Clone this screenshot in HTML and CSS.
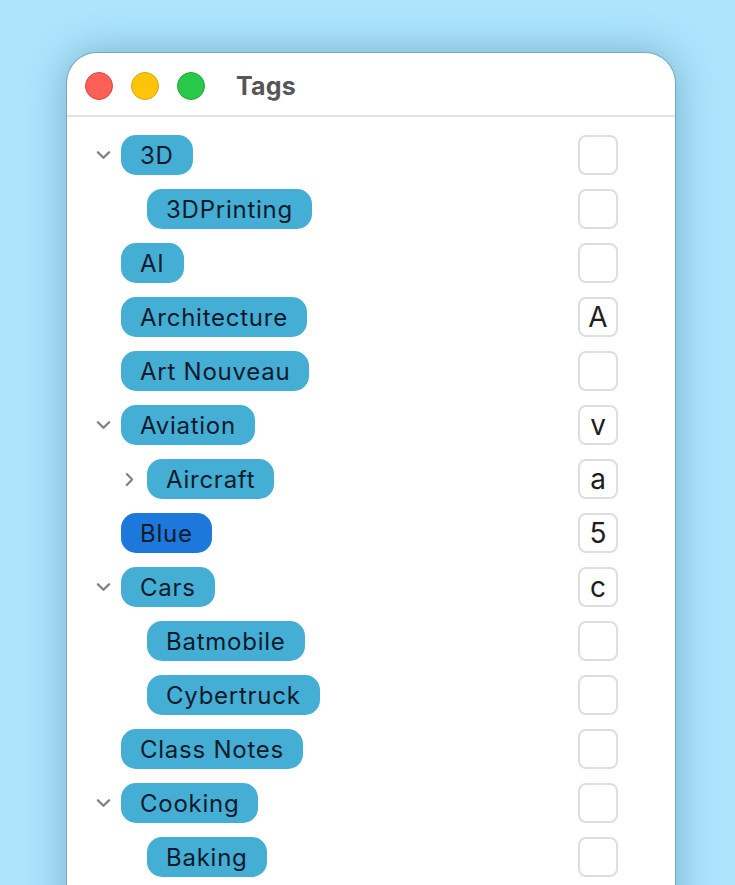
FILE: index.html
```html
<!DOCTYPE html>
<html lang="en">
<head>
    <meta charset="UTF-8">
    <meta name="viewport" content="width=device-width, initial-scale=1.0">
    <title>Tags</title>
    <link rel="stylesheet" href="styles.css">
</head>
<body>

    <div class="window">
        <div class="titlebar">
            <div class="lights">
                <span class="light red"></span>
                <span class="light yellow"></span>
                <span class="light green"></span>
            </div>
            <h1>Tags</h1>
        </div>

        <ul class="tag-list">
            <li class="tag-row">
                <span class="disc down"><svg viewBox="0 0 16 10"><path d="M2 2 L8 8 L14 2"/></svg></span>
                <span class="pill">3D</span>
                <span class="key"></span>
            </li>
            <li class="tag-row lvl1">
                <span class="disc"></span>
                <span class="pill">3DPrinting</span>
                <span class="key"></span>
            </li>
            <li class="tag-row">
                <span class="disc"></span>
                <span class="pill">AI</span>
                <span class="key"></span>
            </li>
            <li class="tag-row">
                <span class="disc"></span>
                <span class="pill">Architecture</span>
                <span class="key">A</span>
            </li>
            <li class="tag-row">
                <span class="disc"></span>
                <span class="pill">Art Nouveau</span>
                <span class="key"></span>
            </li>
            <li class="tag-row">
                <span class="disc down"><svg viewBox="0 0 16 10"><path d="M2 2 L8 8 L14 2"/></svg></span>
                <span class="pill">Aviation</span>
                <span class="key">v</span>
            </li>
            <li class="tag-row lvl1">
                <span class="disc right"><svg viewBox="0 0 10 16"><path d="M2 2 L8 8 L2 14"/></svg></span>
                <span class="pill">Aircraft</span>
                <span class="key">a</span>
            </li>
            <li class="tag-row">
                <span class="disc"></span>
                <span class="pill blue">Blue</span>
                <span class="key">5</span>
            </li>
            <li class="tag-row">
                <span class="disc down"><svg viewBox="0 0 16 10"><path d="M2 2 L8 8 L14 2"/></svg></span>
                <span class="pill">Cars</span>
                <span class="key">c</span>
            </li>
            <li class="tag-row lvl1">
                <span class="disc"></span>
                <span class="pill">Batmobile</span>
                <span class="key"></span>
            </li>
            <li class="tag-row lvl1">
                <span class="disc"></span>
                <span class="pill">Cybertruck</span>
                <span class="key"></span>
            </li>
            <li class="tag-row">
                <span class="disc"></span>
                <span class="pill">Class Notes</span>
                <span class="key"></span>
            </li>
            <li class="tag-row">
                <span class="disc down"><svg viewBox="0 0 16 10"><path d="M2 2 L8 8 L14 2"/></svg></span>
                <span class="pill">Cooking</span>
                <span class="key"></span>
            </li>
            <li class="tag-row lvl1">
                <span class="disc"></span>
                <span class="pill">Baking</span>
                <span class="key"></span>
            </li>
        </ul>
    </div>

</body>
</html>
```

FILE: styles.css
```css
:root { --pill: #45aed5; --pill-blue: #1c78db; --ink: #0b1b2b; --line: #e2e2e2; }
html, body { height: 100%; }
body {
    margin: 0;
    font-family: Inter, "Noto Sans", sans-serif;
    background: #ace5fc;
    overflow: hidden;
    padding: 53px 0 0 67px;
    box-sizing: border-box;
}

/* VENTANA */
.window {
    width: 608px;
    height: 900px;
    background: #fff;
    border-radius: 30px 30px 0 0;
    box-shadow: 0 0 0 1px rgba(60, 100, 120, 0.35), 0 0 40px rgba(20, 70, 100, 0.35);
}

.titlebar {
    height: 59px;
    padding-top: 3px;
    display: flex;
    align-items: center;
    padding-left: 18px;
    border-bottom: 2px solid var(--line);
}
.lights { display: flex; gap: 18px; }
.light { width: 28px; height: 28px; border-radius: 50%; box-sizing: border-box; }
.light.red { background: #fe5f57; border: 1px solid #e0443e; }
.light.yellow { background: #fec40a; border: 1px solid #dea40a; }
.light.green { background: #2ac84a; border: 1px solid #1aab29; }
.titlebar h1 { margin: 0 0 0 31px; font-size: 25px; font-weight: 700; color: #565656; letter-spacing: 0.2px; }

/* LISTA DE TAGS */
.tag-list { list-style: none; margin: 0; padding: 11px 0 0; }
.tag-row {
    height: 54px;
    display: flex;
    align-items: center;
    padding-left: 28px;
    padding-right: 57px;
}
.tag-row.lvl1 { padding-left: 54px; }

.disc { width: 16px; margin-right: 10px; display: flex; justify-content: center; align-items: center; }
.disc svg { fill: none; stroke: #7f7f7f; stroke-width: 2.4; stroke-linecap: round; stroke-linejoin: round; }
.disc.down svg { width: 15px; height: 10px; }
.disc.right svg { width: 9px; height: 15px; }

.pill {
    height: 40px;
    line-height: 41px;
    padding: 0 19px;
    border-radius: 15px;
    background: var(--pill);
    color: var(--ink);
    font-size: 24px;
    letter-spacing: 0.75px;
}
.pill.blue { background: var(--pill-blue); }

.key {
    margin-left: auto;
    width: 40px;
    height: 40px;
    box-sizing: border-box;
    border: 2px solid #dedede;
    border-radius: 8px;
    display: flex;
    justify-content: center;
    align-items: center;
    font-size: 28px;
    color: #1e1e1e;
}
```
